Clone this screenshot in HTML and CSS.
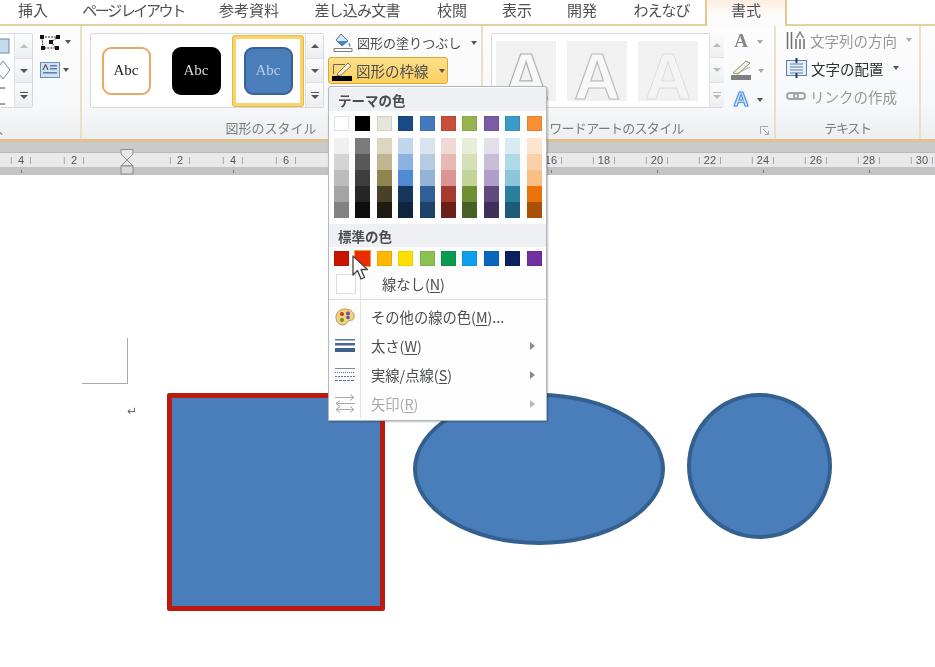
FILE: index.html
```html
<!DOCTYPE html>
<html lang="ja">
<head>
<meta charset="utf-8">
<title>書式</title>
<link rel="stylesheet" href="styles.css">
</head>
<body>
<div class="app">
  <nav class="tabs">
    <span class="tab w1">挿入</span>
    <span class="tab w2">ページ レイアウト</span>
    <span class="tab w3">参考資料</span>
    <span class="tab w4">差し込み文書</span>
    <span class="tab w5">校閲</span>
    <span class="tab w6">表示</span>
    <span class="tab w7">開発</span>
    <span class="tab w8">わえなび</span>
    <span class="tab active">書式</span>
    <span class="tab-rest"></span>
  </nav>

  <div class="ribbon">
    <section class="group g-insert">
      <div class="group-body">
        <div class="gallery shapes">
          <svg class="shape-icons" width="13" height="73" viewBox="0 0 13 73">
            <rect x="-6" y="5" width="15" height="14" fill="#c5d9f0" stroke="#6f87a8"/>
            <path d="M-4 36 L3 27 L10 36 L3 45 Z" fill="#fff" stroke="#6f87a8"/>
            <path d="M0 54 H5 M0 70 H5" stroke="#444"/>
          </svg>
          <div class="scroll"><button class="sbtn disabled"><i class="up"></i></button><button class="sbtn"><i class="down"></i></button><button class="sbtn"><i class="more"></i></button></div>
        </div>
        <div class="edit-tools">
          <div class="tool-row">
            <svg width="22" height="16" viewBox="0 0 22 16"><path d="M2 3 H18 L11 8 L16 14 H3 Z" fill="none" stroke="#333" stroke-dasharray="2 1"/><g fill="#111"><rect width="4" height="4" x="0" y="1"/><rect width="4" height="4" x="16" y="1"/><rect width="4" height="4" x="9" y="6"/><rect width="4" height="4" x="1" y="12"/><rect width="4" height="4" x="15" y="12"/></g></svg>
            <i class="caret"></i>
          </div>
          <div class="tool-row">
            <svg width="20" height="16" viewBox="0 0 20 16"><rect x=".5" y=".5" width="19" height="15" fill="#cfe0f3" stroke="#6c8fb8"/><rect x="10" y="3" width="7" height="1.5" fill="#5a7ca6"/><rect x="10" y="6" width="7" height="1.5" fill="#5a7ca6"/><rect x="3" y="10" width="14" height="1.5" fill="#5a7ca6"/><path d="M3 8 L5.500 2.500 L8 8" fill="none" stroke="#333"/></svg>
            <i class="caret"></i>
          </div>
        </div>
      </div>
      <div class="group-label cut">入</div>
    </section>

    <section class="group g-style">
      <div class="group-body">
        <div class="gallery styles">
          <div class="style-item"><span class="abc orange">Abc</span></div>
          <div class="style-item"><span class="abc black">Abc</span></div>
          <div class="style-item selected"><span class="abc blue">Abc</span></div>
          <div class="scroll"><button class="sbtn"><i class="up"></i></button><button class="sbtn"><i class="down"></i></button><button class="sbtn"><i class="more"></i></button></div>
        </div>
        <div class="shape-cmds">
          <div class="cmd">
            <svg width="20" height="19" viewBox="0 0 20 19"><path d="M8 1 L15 8 L9 13 L3 7 Z" fill="#dbe7f4" stroke="#52708f"/><path d="M4 8 L15 8 L9 13 Z" fill="#4a86c5"/><path d="M16 9 Q18 12 17 14 Q15 13 16 9 Z" fill="#4a86c5"/><path d="M1 15.500 H19 V18.500 H1 Z" fill="#fff" stroke="#7d7d7d"/></svg>
            <span>図形の塗りつぶし</span><i class="caret"></i>
          </div>
          <div class="cmd on">
            <svg width="20" height="20" viewBox="0 0 20 20"><path d="M1.500 13 V3.500 H13" fill="none" stroke="#666"/><path d="M6 12 L16 2 L19 5 L9 14 L5 15 Z" fill="#f7f2df" stroke="#8a7a50"/><rect x="0" y="15" width="20" height="5" fill="#000"/></svg>
            <span>図形の枠線</span><i class="caret"></i>
          </div>
        </div>
      </div>
      <div class="group-label lbl-style">図形のスタイル</div>
    </section>

    <section class="group g-art">
      <div class="group-body">
        <div class="gallery arts">
          <div class="art a1"><span>A</span></div>
          <div class="art a2"><span>A</span></div>
          <div class="art a3"><span>A</span></div>
          <div class="scroll faint"><button class="sbtn disabled"><i class="up"></i></button><button class="sbtn disabled"><i class="down"></i></button><button class="sbtn disabled"><i class="more"></i></button></div>
        </div>
        <div class="art-tools">
          <div class="art-tool"><span class="glyph-a">A</span><i class="caret pale"></i></div>
          <div class="art-tool">
            <svg width="21" height="20" viewBox="0 0 21 20"><path d="M2 13 L15 1 L19 3 L7 14 Z" fill="#f2f2ee" stroke="#8d9168"/><path d="M7 13 L19 7" stroke="#a9ad86"/><rect y="15" width="20" height="5" fill="#808080"/></svg>
            <i class="caret pale"></i>
          </div>
          <div class="art-tool"><span class="glyph-glow">A</span><i class="caret"></i></div>
        </div>
      </div>
      <div class="group-label lbl-art">ワードアートのスタイル</div>
      <svg class="launcher" width="9" height="9" viewBox="0 0 9 9"><path d="M.5 8 V.5 H8 M3 3 L8 8 M4.500 8.500 H8.500 V4.500" fill="none" stroke="#a5a8ad"/></svg>
    </section>

    <section class="group g-text">
      <div class="group-body text-cmds">
        <div class="tcmd off">
          <svg width="20" height="19" viewBox="0 0 20 19"><path d="M1.500 1 V18 M5.500 1 V18 M10 8 V18 M14 8 V18 M18 8 V18" stroke="#6d6d6d" stroke-width="1.500"/><path d="M10.500 7 L14 1 L17.500 7" fill="none" stroke="#8a8a8a" stroke-width="1.500"/></svg>
          <span>文字列の方向</span><i class="caret pale"></i>
        </div>
        <div class="tcmd">
          <svg width="21" height="20" viewBox="0 0 21 20"><rect x=".5" y="2.500" width="20" height="15" fill="#e6f0fa" stroke="#5d7fa6"/><path d="M4 6 H17 M4 9 H17 M4 12 H17 M4 15 H17" stroke="#5d7fa6"/><path d="M10.500 0 V5 M10.500 15 V20" stroke="#1d3f6e" stroke-width="2"/></svg>
          <span>文字の配置</span><i class="caret"></i>
        </div>
        <div class="tcmd off">
          <svg width="20" height="8" viewBox="0 0 20 8"><rect x="1" y="1" width="11" height="6" rx="3" fill="none" stroke="#a4a4a4" stroke-width="2"/><rect x="8" y="1" width="11" height="6" rx="3" fill="none" stroke="#a4a4a4" stroke-width="2"/></svg>
          <span>リンクの作成</span>
        </div>
      </div>
      <div class="group-label lbl-text">テキスト</div>
    </section>

    <section class="group g-end"></section>
  </div>

  <div class="ruler">
    <div class="ruler-top">
      <span>4</span><span>2</span><span class="blank"></span><span>2</span><span>4</span><span>6</span><span>8</span><span>10</span><span>12</span><span>14</span><span>16</span><span>18</span><span>20</span><span>22</span><span>24</span><span>26</span><span>28</span><span>30</span>
    </div>
    <div class="ruler-bottom"></div>
    <svg class="indent" width="14" height="26" viewBox="0 0 14 26"><path d="M1 .5 H13 V5 L7 11 L13 17 H1 L7 11 L1 5 Z" fill="#e6e6e6" stroke="#8d8d8d"/><rect x="1" y="17" width="12" height="8" fill="#d8d8d8" stroke="#8d8d8d"/></svg>
  </div>

  <main class="canvas">
    <div class="corner"></div>
    <span class="para">↵</span>
    <div class="square"></div>
    <div class="ellipse"></div>
    <div class="circle"></div>
  </main>

  <div class="menu">
    <div class="menu-head">テーマの色</div>
    <div class="swatches top">
      <i class="sw t1"></i><i class="sw t2"></i><i class="sw t3"></i><i class="sw t4"></i><i class="sw t5"></i><i class="sw t6"></i><i class="sw t7"></i><i class="sw t8"></i><i class="sw t9"></i><i class="sw t10"></i>
    </div>
    <div class="swatches shades">
      <i class="col c1"></i><i class="col c2"></i><i class="col c3"></i><i class="col c4"></i><i class="col c5"></i><i class="col c6"></i><i class="col c7"></i><i class="col c8"></i><i class="col c9"></i><i class="col c10"></i>
    </div>
    <div class="menu-head second">標準の色</div>
    <div class="swatches std">
      <i class="sw s1"></i><i class="sw s2"></i><i class="sw s3"></i><i class="sw s4"></i><i class="sw s5"></i><i class="sw s6"></i><i class="sw s7"></i><i class="sw s8"></i><i class="sw s9"></i><i class="sw s10"></i>
    </div>
    <div class="items">
      <div class="item none"><span class="item-icon"><i class="nobox"></i></span><span class="item-text">線なし(<u>N</u>)</span></div>
      <div class="rule"></div>
      <div class="item">
        <span class="item-icon"><svg width="20" height="18" viewBox="0 0 20 18"><path d="M10 1 C16 1 20 5 19 10 C18 13 15 12 13 13 C12 15 11 17 8 17 C3 17 1 13 1 9 C1 4 5 1 10 1 Z" fill="#f3d27e" stroke="#b89a58"/><circle cx="7" cy="6" r="2" fill="#c0392b"/><circle cx="13" cy="5.500" r="2" fill="#7a4aa0"/><circle cx="7" cy="12" r="2" fill="#5a9a32"/><circle cx="13" cy="9.500" r="1.800" fill="#3a5ea8"/></svg></span>
        <span class="item-text">その他の線の色(<u>M</u>)...</span>
      </div>
      <div class="item">
        <span class="item-icon"><svg width="20" height="14" viewBox="0 0 20 14"><rect y="0" width="20" height="1.500" fill="#5a76a0"/><rect y="4" width="20" height="2.500" fill="#4a6795"/><rect y="9" width="20" height="4" fill="#3f5f90"/></svg></span>
        <span class="item-text">太さ(<u>W</u>)</span><i class="sub"></i>
      </div>
      <div class="item">
        <span class="item-icon"><svg width="20" height="13" viewBox="0 0 20 13"><path d="M0 .5 H20" stroke="#7d8ca5"/><path d="M0 4.500 H20" stroke="#5a76a0" stroke-dasharray="1 1"/><path d="M0 8.500 H20" stroke="#5a76a0" stroke-dasharray="2 1"/><path d="M0 12.500 H20" stroke="#5a76a0" stroke-dasharray="3 1"/></svg></span>
        <span class="item-text">実線/点線(<u>S</u>)</span><i class="sub"></i>
      </div>
      <div class="item dim">
        <span class="item-icon"><svg width="20" height="19" viewBox="0 0 20 19" fill="none" stroke="#a9a9a9"><path d="M0 3.500 H19 M15 .5 L19 3.500 L15 6.500"/><path d="M20 9.500 H1 M5 6.500 L1 9.500 L5 12.500"/><path d="M1 15.500 H19 M5 12.500 L1 15.500 L5 18.500 M15 12.500 L19 15.500 L15 18.500"/></svg></span>
        <span class="item-text">矢印(<u>R</u>)</span><i class="sub"></i>
      </div>
    </div>
    <svg class="cursor" width="18" height="26" viewBox="0 0 18 26"><path d="M1 1 V20 L5.500 15.500 L9 24 L12.500 22.500 L9 14.500 L15.500 14.500 Z" fill="#fff" stroke="#444" stroke-width="1.300" stroke-linejoin="round"/></svg>
  </div>
</div>
</body>
</html>
```

FILE: styles.css
```css
* { box-sizing: border-box; }
html, body { margin: 0; padding: 0; background: #fff; overflow: hidden; }
i { display: block; font-style: normal; }
button { padding: 0; margin: 0; font: inherit; }

.app {
  position: relative;
  width: 935px;
  height: 667px;
  overflow: hidden;
  display: flex;
  flex-direction: column;
  font-family: "Noto Sans CJK JP", "Noto Sans", sans-serif;
  color: #444;
  filter: blur(0.35px);
}

/* tabs */
.tabs { display: flex; height: 26px; background: #fff; flex: none; }
.tab {
  display: flex; justify-content: center; align-items: flex-start;
  height: 26px; font-size: 15px; line-height: 20px; color: #4d4f52; white-space: pre;
  border-bottom: 2px solid #e4cfa4;
}
.w1 { width: 66px; } .w3 { width: 98px; }
.w2 { width: 134px; letter-spacing: -2.400px; }
.w4 { width: 118px; letter-spacing: -.800px; }
.w5 { width: 72px; } .w6 { width: 58px; } .w7 { width: 72px; }
.w8 { width: 87px; letter-spacing: -1px; }
.tab.active {
  width: 82px; border: 2px solid #e4c88e; border-bottom: 0; border-top: 0;
  background: linear-gradient(#fdeee0, #fdfcfb 60%, #fbfbfc);
}
.tab-rest { flex: 1; border-bottom: 2px solid #e4cfa4; }

/* ribbon */
.ribbon {
  display: flex; height: 116px; flex: none;
  background: linear-gradient(#fdfdfe, #f7f8f9 70%, #eceef0);
  border-bottom: 3px solid #dfc08e;
}
.group { position: relative; display: flex; flex-direction: column; border-right: 2px solid #eddfc6; flex: none; }
.group-body { display: flex; height: 92px; padding-top: 7px; flex: none; }
.group-label { text-align: center; font-size: 13px; line-height: 20px; color: #7a7d82; white-space: nowrap; }
.g-insert { width: 82px; }
.g-style { width: 401px; }
.g-art { width: 293px; }
.g-text { width: 145px; }
.g-end { flex: 1; border-right: 0; }
.cut { text-align: left; margin-left: -10px; }
.lbl-style { padding-right: 21px; }
.lbl-art { padding-right: 24px; letter-spacing: -.700px; }
.lbl-text { letter-spacing: -1.300px; }
.launcher { position: absolute; right: 5px; bottom: 4px; }

.gallery { display: flex; flex: none; height: 75px; background: #fff; border: 1px solid #d5d8dc; border-radius: 2px; }
.scroll { display: flex; flex-direction: column; align-self: stretch; width: 18px; margin-left: auto; background: #f2f3f5; flex: none; border-left: 1px solid #dfe1e4; }
.sbtn { display: flex; flex: 1; justify-content: center; align-items: center; background: linear-gradient(#fbfbfc, #eceef0); border: 0; border-bottom: 1px solid #dfe1e4; }
.sbtn:last-child { border-bottom: 0; }
.up { width: 0; height: 0; border: 4px solid transparent; border-top: 0; border-bottom: 4px solid #555; }
.down { width: 0; height: 0; border: 4px solid transparent; border-bottom: 0; border-top: 4px solid #555; }
.more { width: 8px; height: 7px; border-top: 1px solid #555; }
.more::after { content: ""; display: block; margin-top: 2px; width: 0; height: 0; border: 4px solid transparent; border-bottom: 0; border-top: 4px solid #555; }
.sbtn.disabled i { opacity: .35; }
.caret { width: 0; height: 0; border: 3px solid transparent; border-bottom: 0; border-top: 4px solid #555; flex: none; }
.caret.pale { border-top-color: #aaa; }

/* shapes group */
.shapes { width: 33px; border-left: 0; }
.shape-icons { flex: none; }
.edit-tools { display: flex; flex-direction: column; gap: 12px; margin: 1px 0 0 7px; }
.tool-row { display: flex; align-items: center; gap: 3px; height: 16px; }

/* style gallery */
.g-style .group-body { padding-left: 8px; }
.styles { width: 234px; align-items: center; }
.style-item { display: flex; justify-content: center; align-items: center; width: 70px; height: 70px; flex: none; }
.style-item.selected { margin-left: 2px; background: #fff; border: 3px solid #f9d468; border-radius: 2px; box-shadow: 0 0 0 1px #e3b65a; }
.abc {
  display: flex; justify-content: center; align-items: center;
  width: 49px; height: 48px; border-radius: 9px;
  font-family: "Liberation Serif", serif; font-size: 15px;
}
.orange { background: #fff; border: 2px solid #e8a866; color: #222; }
.black { background: #000; color: #d8d8d8; }
.blue { background: #4a7ebb; border: 2px solid #386195; color: #b6d0ee; }

.shape-cmds { display: flex; flex-direction: column; flex: none; gap: 4px; width: 150px; margin: -1px 0 0 4px; }
.cmd { display: flex; align-items: center; gap: 4px; height: 21px; padding-left: 5px; font-size: 13px; color: #4a4c50; white-space: nowrap; }
.cmd .caret { margin-left: 6px; }
.cmd.on {
  width: 120px; height: 27px; padding-left: 3px; gap: 4px;
  background: linear-gradient(#fde08a, #fbcf60); border: 1px solid #dfa830; border-radius: 3px;
  font-size: 14.500px;
}

/* wordart */
.g-art .group-body { padding-left: 8px; }
.arts { width: 232px; padding: 7px 0 0 4px; gap: 11px; align-items: flex-start; }
.art { width: 60px; height: 60px; background: #f1f1f1; display: flex; justify-content: center; align-items: flex-end; overflow: hidden; flex: none; }
.art span {
  font-family: "Liberation Sans", sans-serif; font-weight: 700; font-size: 64px; line-height: 48px;
  color: #f8f8f8; -webkit-text-stroke: 1.200px #b0b0b0;
}
.a2 span { -webkit-text-stroke: 1.200px #bcbcbc; }
.a3 span { -webkit-text-stroke: .8px #dadada; color: #f4f4f4; }
.faint { width: 15px; margin-top: -8px; height: 74px; background: #f7f8f9; }
.art-tools { display: flex; flex-direction: column; gap: 5px; margin: -4px 0 0 8px; }
.art-tool { display: flex; align-items: center; gap: 6px; height: 24px; }
.art-tool .caret { margin-top: 2px; }
.glyph-a { width: 20px; text-align: center; font-family: "Liberation Serif", serif; font-weight: 700; font-size: 19px; line-height: 24px; color: #888; }
.glyph-glow {
  width: 20px; text-align: center; font-family: "Liberation Sans", sans-serif; font-weight: 700; font-size: 21px; line-height: 24px;
  color: #cfe4fa; -webkit-text-stroke: 1px #4d8fd6; text-shadow: 0 0 3px #8cc4f5;
}

/* text group */
.text-cmds { flex-direction: column; padding: 2px 0 0 10px; gap: 4px; }
.tcmd { display: flex; align-items: center; gap: 3px; height: 24px; font-size: 14.500px; color: #2e3033; white-space: nowrap; }
.tcmd svg { flex: none; margin-right: 1px; }
.tcmd .caret { margin-left: 6px; }
.tcmd.off { color: #94979b; }

/* ruler */
.ruler { position: relative; flex: none; height: 33px; background: #c9cacc; padding-top: 10px; }
.ruler-top { display: flex; height: 15px; margin-left: -5.500px; background: #e9e9ea; border-top: 1px solid #bbb; }
.ruler-top span {
  display: flex; justify-content: space-around; align-items: center;
  width: 53px; flex: none; padding: 0 13px;
  font-family: "Liberation Sans", sans-serif; font-size: 11px; line-height: 14px; color: #555;
}
.ruler-top span::before, .ruler-top span::after { content: "|"; font-size: 7px; color: #777; }
.ruler-top .blank::before, .ruler-top .blank::after { content: ""; }
.ruler-bottom {
  height: 8px;
  background: repeating-linear-gradient(90deg, transparent 0 21px, #777 21px 22px, transparent 22px 106px) 0 3px / 100% 3px no-repeat #c2c3c5;
}
.indent { position: absolute; left: 120px; top: 7px; }

/* canvas */
.canvas { position: relative; flex: 1; background: #fff; }
.corner { position: absolute; left: 82px; top: 163px; width: 46px; height: 46px; border-right: 1px solid #a9a9a9; border-bottom: 1px solid #a9a9a9; }
.para { position: absolute; left: 127px; top: 228px; font-family: "DejaVu Sans", sans-serif; font-size: 12px; line-height: 16px; color: #666; }
.square { position: absolute; left: 167px; top: 218px; width: 218px; height: 218px; background: #4a7ebb; border: 5px solid #bb1a0e; border-radius: 2px; }
.ellipse { position: absolute; left: 413px; top: 218px; width: 252px; height: 152px; background: #4a7ebb; border: 4px solid #33608f; border-radius: 50%; }
.circle { position: absolute; left: 687px; top: 218px; width: 145px; height: 146px; background: #4a7ebb; border: 4px solid #33608f; border-radius: 50%; }

/* menu */
.menu {
  position: absolute; left: 328px; top: 86px; width: 219px; height: 335px;
  background: #fdfdfd; border: 1px solid #b4b7bb; border-radius: 3px 3px 0 0;
  box-shadow: 1px 1px 2px rgba(0,0,0,.25);
}
.menu-head { height: 23px; padding: 1px 0 0 9px; font-size: 13.500px; line-height: 22px; font-weight: 700; color: #4a4c50; background: #eef0f3; margin-top: 1px; }
.menu-head.second { margin-top: 6px; }
.swatches { display: grid; grid-template-columns: repeat(10, 15px); column-gap: 6.400px; padding-left: 5px; }
.swatches.top { margin-top: 5px; }
.swatches.shades { margin-top: 7px; }
.swatches.std { margin-top: 4px; }
.sw { height: 15px; box-shadow: inset 0 0 0 1px rgba(0,0,0,.08); }
.col { height: 80px; }
.t1 { background: #fff; box-shadow: inset 0 0 0 1px #e2e2e2; } .t2 { background: #000; } .t3 { background: #e6e5dc; } .t4 { background: #1a4a85; } .t5 { background: #4479bb; }
.t6 { background: #c94f3a; } .t7 { background: #97b34f; } .t8 { background: #7a5ea5; } .t9 { background: #3a9bc9; } .t10 { background: #f98e35; }
.s1 { background: #c81400; } .s2 { background: #ee2b00; box-shadow: 0 0 0 1px #e8a13a; } .s3 { background: #ffb800; } .s4 { background: #ffdf00; } .s5 { background: #8cc152; }
.s6 { background: #0a9a50; } .s7 { background: #0ea0ea; } .s8 { background: #0a68bc; } .s9 { background: #0a2060; } .s10 { background: #7030a0; }
.c1 { background: linear-gradient(#f0f0f0 20%, #d4d4d4 20% 40%, #bcbcbc 40% 60%, #a4a4a4 60% 80%, #828282 80%); }
.c2 { background: linear-gradient(#7b7b7b 20%, #585858 20% 40%, #3e3e3e 40% 60%, #262626 60% 80%, #0e0e0e 80%); }
.c3 { background: linear-gradient(#dcd5c0 20%, #bfb68f 20% 40%, #8f8450 40% 60%, #484128 60% 80%, #1e1b10 80%); }
.c4 { background: linear-gradient(#c2d6ee 20%, #8cb2e2 20% 40%, #4f8ad2 40% 60%, #17365d 60% 80%, #0f243e 80%); }
.c5 { background: linear-gradient(#d9e3ef 20%, #b6cae2 20% 40%, #95b3d7 40% 60%, #2f5f96 60% 80%, #1f4068 80%); }
.c6 { background: linear-gradient(#f0d8d6 20%, #e8b8b2 20% 40%, #dc9590 40% 60%, #a53a30 60% 80%, #6a2018 80%); }
.c7 { background: linear-gradient(#e8eddb 20%, #d5e0b6 20% 40%, #c2d498 40% 60%, #6f8f35 60% 80%, #4a5f25 80%); }
.c8 { background: linear-gradient(#e2deea 20%, #c8bed8 20% 40%, #b09fc8 40% 60%, #5f497f 60% 80%, #3e3058 80%); }
.c9 { background: linear-gradient(#d9ebf2 20%, #b0d9e8 20% 40%, #8cc6dc 40% 60%, #2a7f9f 60% 80%, #1c5a78 80%); }
.c10 { background: linear-gradient(#fde4d0 20%, #fbd0a8 20% 40%, #fabd85 40% 60%, #ea7208 60% 80%, #a85008 80%); }

.items { position: relative; margin-top: 5px; }
.items::before { content: ""; position: absolute; left: 31px; top: 0; bottom: 0; width: 1px; background: #e2e3e5; }
.item { display: flex; align-items: center; height: 29px; font-size: 14.300px; color: #4a4c50; position: relative; }
.item-icon { display: flex; justify-content: center; align-items: center; width: 32px; flex: none; }
.item-text { margin-left: 10px; white-space: nowrap; }
.item u { text-underline-offset: 2px; }
.none { height: 25px; }
.none .item-text { margin-left: 21px; }
.nobox { width: 20px; height: 20px; background: #fff; border: 1px solid #dcdcdc; margin-left: 1px; }
.rule { height: 1px; background: #dedfe1; margin: 3px 0 2px; position: relative; }
.dim { color: #a8aaad; }
.sub { position: absolute; right: 11px; top: 11px; width: 0; height: 0; border: 4px solid transparent; border-right: 0; border-left: 5px solid #8c8c8c; }
.dim .sub { border-left-color: #b8b8b8; }
.cursor { position: absolute; left: 23px; top: 168px; }
```
